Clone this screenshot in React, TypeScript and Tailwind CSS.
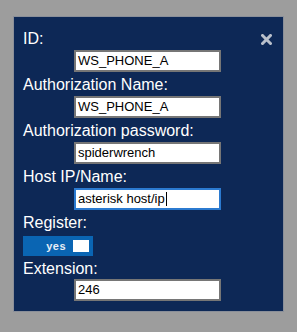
import { useState } from "react";

const fields = [
  { label: "ID:", value: "WS_PHONE_A" },
  { label: "Authorization Name:", value: "WS_PHONE_A" },
  { label: "Authorization password:", value: "spiderwrench" },
  { label: "Host IP/Name:", value: "asterisk host/ip", focused: true },
];

function Field({ label, value, focused, first }: { label: string; value: string; focused?: boolean; first?: boolean }) {
  return (
    <div className="mb-[4px]">
      <div className="flex items-start justify-between">
        <span className="h-[18px] text-[16px] leading-[18px] text-white">{label}</span>
        {first && (
          <svg width="11" height="11" viewBox="0 0 11 11" className="mt-[4px] mr-[1px]">
            <path d="M1.5 1.5 L9.5 9.5 M9.5 1.5 L1.5 9.5" stroke="#b9c0cb" strokeWidth="3" strokeLinecap="square" />
          </svg>
        )}
      </div>
      <div
        className={`mt-[2px] ml-[51px] flex h-[22px] w-[147px] items-center border-2 bg-white pl-[2px] text-[13px] text-black ${
          focused ? "border-[#2b7ad0]" : "border-[#767676]"
        }`}
      >
        {value}
        {focused && <span className="ml-[1px] h-[14px] w-px bg-black" />}
      </div>
    </div>
  );
}

export default function App() {
  const [register, setRegister] = useState(true);

  return (
    <div className="h-[332px] w-[297px] bg-[#9d9d9d] pt-[16px] pl-[13px] font-['Liberation_Sans',Arial,sans-serif]">
      <div className="w-[271px] border border-[#8a8f99] bg-[#0d2856] pt-[13px] pr-[10px] pb-[10px] pl-[9px]">
        {fields.map((f, i) => (
          <Field key={i} label={f.label} value={f.value} focused={f.focused} first={i === 0} />
        ))}

        <div className="h-[18px] text-[16px] leading-[18px] text-white">Register:</div>
        <button
          onClick={() => setRegister(!register)}
          className="mt-[4px] flex h-[20px] w-[70px] items-center justify-end gap-[7px] bg-[#0a65b3] pr-[4px]"
        >
          <span className="text-[11px] font-bold leading-none tracking-[0.5px] text-[#e8eef6]">{register ? "yes" : "no"}</span>
          <span className="h-[12px] w-[16px] bg-white" />
        </button>

        <div className="mt-[4px] h-[18px] text-[16px] leading-[18px] text-white">Extension:</div>
        <div className="mt-[1px] ml-[51px] flex h-[22px] w-[147px] items-center border-2 border-[#767676] bg-white pl-[2px] text-[13px] text-black">
          246
        </div>
      </div>
    </div>
  );
}
